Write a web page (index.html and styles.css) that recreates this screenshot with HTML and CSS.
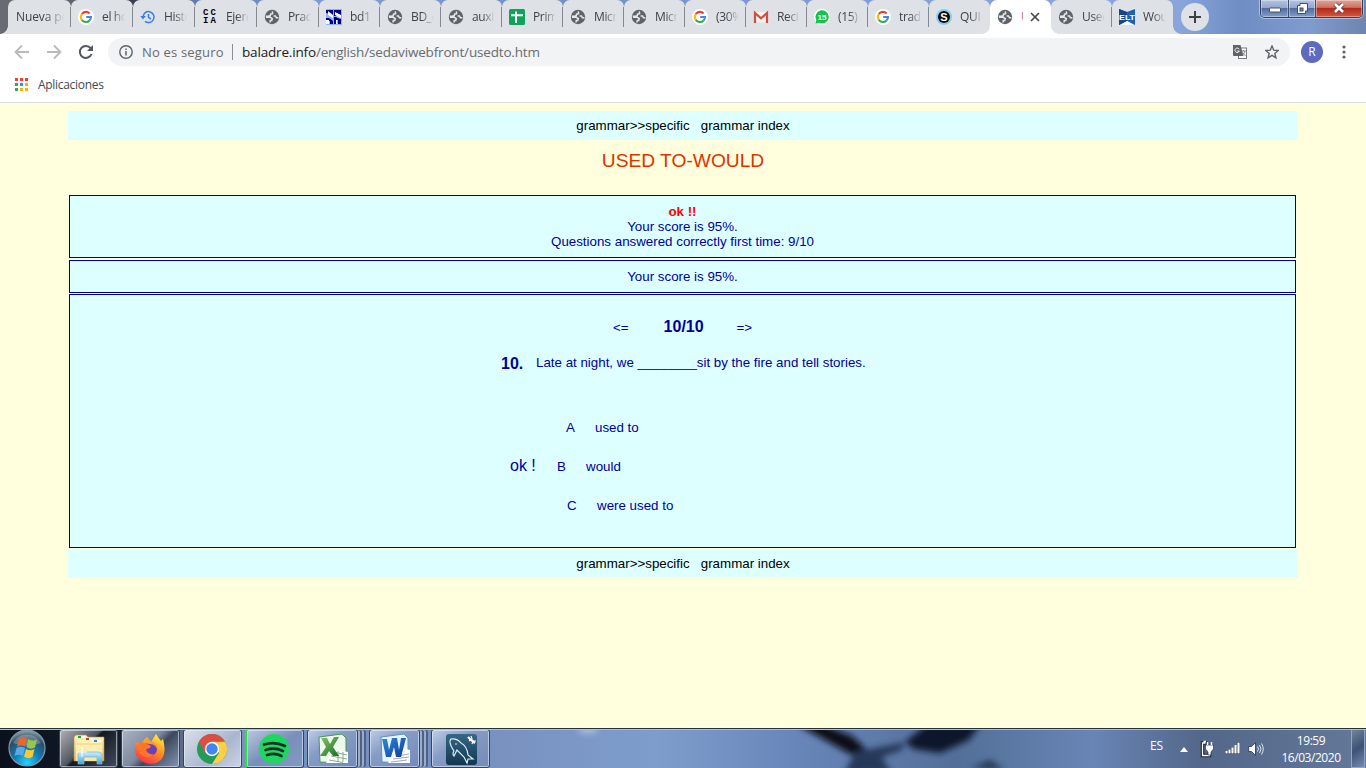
FILE: index.html
```html
<!DOCTYPE html>
<html lang="es">
<head>
<meta charset="utf-8">
<title>Used to - would</title>
<link rel="stylesheet" href="styles.css">
</head>
<body>
<svg class="defs" width="0" height="0">
  <defs>
    <symbol id="globe" viewBox="0 0 16 16"><circle cx="8" cy="8" r="7.2" fill="#5f6368"/><path d="M8.300 2.300 8.600 4.600 6.500 5.200 6.300 6.700 4 7.300H1.800M2 8.300H6.200L8.300 9.500 7.700 11.500H6.300L6 13.500M9.600 7H11.500L12.400 8.800H14.400" fill="none" stroke="#e6e8eb" stroke-width="1.500"/></symbol>
    <symbol id="google" viewBox="0 0 16 16"><circle cx="8" cy="8" r="8" fill="#fff"/><path d="M3.8 5.1A5 5 0 0 1 11.6 4.5" fill="none" stroke="#ea4335" stroke-width="2.1"/><path d="M3.8 5.1A5 5 0 0 0 3.8 10.9" fill="none" stroke="#fbbc05" stroke-width="2.1"/><path d="M3.8 10.9A5 5 0 0 0 11.5 11.5" fill="none" stroke="#34a853" stroke-width="2.1"/><path d="M11.5 11.5A5 5 0 0 0 13 8H8.2" fill="none" stroke="#4285f4" stroke-width="2.1"/></symbol>
    <linearGradient id="fold" x2="0" y2="1"><stop stop-color="#fff4b4"/><stop offset="1" stop-color="#e5bd5e"/></linearGradient>
    <linearGradient id="ice" x2="0" y2="1"><stop stop-color="#c9efff"/><stop offset="1" stop-color="#4ba3d2"/></linearGradient>
    <radialGradient id="orb" cx=".5" cy=".9" r=".9"><stop stop-color="#26d2ff"/><stop offset=".4" stop-color="#127bb5"/><stop offset=".75" stop-color="#2d4c63"/><stop offset="1" stop-color="#92a9b7"/></radialGradient>
    <linearGradient id="fox" x1=".8" x2=".3" y2="1"><stop stop-color="#fff044"/><stop offset=".45" stop-color="#ff9520"/><stop offset="1" stop-color="#f52e50"/></linearGradient>
    <linearGradient id="xl" x2="1" y2="1"><stop stop-color="#8cc569"/><stop offset="1" stop-color="#18702c"/></linearGradient>
    <linearGradient id="wd" x2="1" y2="1"><stop stop-color="#2a8cdf"/><stop offset="1" stop-color="#123a98"/></linearGradient>
    <linearGradient id="sql" x2="0" y2="1"><stop stop-color="#356889"/><stop offset="1" stop-color="#123750"/></linearGradient>
    <linearGradient id="sky"><stop stop-color="#0b111c"/><stop offset=".1" stop-color="#161e2e"/><stop offset=".15" stop-color="#8194b8"/><stop offset=".22" stop-color="#7490bf"/><stop offset=".35" stop-color="#7890be"/><stop offset=".48" stop-color="#7e9dcc"/><stop offset=".58" stop-color="#6986ba"/><stop offset=".7" stop-color="#526f98"/><stop offset=".8" stop-color="#6985b5"/><stop offset=".88" stop-color="#526789"/><stop offset="1" stop-color="#64799a"/></linearGradient>
    <filter id="soft" x="-30%" y="-60%" width="160%" height="220%"><feGaussianBlur stdDeviation="3"/></filter>
  </defs>
</svg>

<header class="tabstrip">
  <div class="tab wide first"><span class="label">Nueva pe</span></div>
  <div class="tab wide"><svg class="fav"><use href="#google"/></svg><span class="label">el ho</span></div>
  <div class="tab wide"><svg class="fav" viewBox="0 0 16 16"><path d="M3 8.2A5.5 5.5 0 1 1 5 12.3M8.5 5V8.4L11 10" fill="none" stroke="#3b7de8" stroke-width="1.5"/><path d="M.3 7H5.8L3 10.4Z" fill="#3b7de8"/></svg><span class="label">Histo</span></div>
  <div class="tab wide"><span class="fav ccia"><b>CC</b><b>IA</b></span><span class="label">Ejerc</span></div>
  <div class="tab wide"><svg class="fav"><use href="#globe"/></svg><span class="label">Prac</span></div>
  <div class="tab"><svg class="fav" viewBox="0 0 16 16"><rect width="16" height="16" fill="#8db0ff"/><path d="M0 1H7V7H5L1 4H0ZM8 1H15V7L11 4V7H8ZM0 9H3L7 12V15H4V12H0ZM8 8H10L15 12V15H12V11H8Z" fill="#000087"/><path d="M2 2 7 6V9L2 6ZM9 3 15 6V9L9 6ZM0 11H3V15H0ZM8 11H11V15H8Z" fill="#fff"/><path d="M1 1H7V5ZM9 1H15V5ZM8 8 15 10V13L10 10V15H8Z" fill="#000087"/></svg><span class="label">bd1</span></div>
  <div class="tab"><svg class="fav"><use href="#globe"/></svg><span class="label">BD_c</span></div>
  <div class="tab"><svg class="fav"><use href="#globe"/></svg><span class="label">auxil</span></div>
  <div class="tab"><svg class="fav" viewBox="0 0 16 16"><rect width="16" height="16" rx="1.5" fill="#12a15b"/><path d="M2 6.2H14M7 2.5V14" stroke="#fff" stroke-width="2"/></svg><span class="label">Prim</span></div>
  <div class="tab"><svg class="fav"><use href="#globe"/></svg><span class="label">Micr</span></div>
  <div class="tab"><svg class="fav"><use href="#globe"/></svg><span class="label">Micr</span></div>
  <div class="tab"><svg class="fav"><use href="#google"/></svg><span class="label">(30%</span></div>
  <div class="tab"><svg class="fav" viewBox="0 0 16 16"><rect x="1" y="3" width="14" height="10.5" fill="#f2f2f2"/><path d="M2 14V4L8 9.3 14 4V14" fill="none" stroke="#d54b3d" stroke-width="2.2"/></svg><span class="label">Reci</span></div>
  <div class="tab"><svg class="fav" viewBox="0 0 16 16"><circle cx="8" cy="8" r="8" fill="#fff"/><path d="M1.6 14.4 2.3 11A6.6 6.6 0 1 1 5 13.7Z" fill="#12c34c"/><text class="badge15" x="8" y="10.9" text-anchor="middle">15</text></svg><span class="label">(15)</span></div>
  <div class="tab"><svg class="fav"><use href="#google"/></svg><span class="label">trad</span></div>
  <div class="tab last-left"><svg class="fav" viewBox="0 0 16 16"><circle cx="8" cy="8" r="8" fill="#8bcdec"/><circle cx="8" cy="8" r="6" fill="#080808"/><text class="letter-s" x="8" y="12" text-anchor="middle">S</text></svg><span class="label">QUI</span></div>
  <div class="tab active"><svg class="fav"><use href="#globe"/></svg><span class="label sliver">U</span><svg class="close" viewBox="0 0 10 10"><path d="M1 1 9 9M9 1 1 9" stroke="#45494d" stroke-width="1.7"/></svg></div>
  <div class="tab after"><svg class="fav"><use href="#globe"/></svg><span class="label">Usec</span></div>
  <div class="tab end"><svg class="fav" viewBox="0 0 16 16"><path d="M0 0 8 3 16 0V16L8 12 0 16Z" fill="#1d62b0"/><path d="M0 0 8 3V12L0 16Z" fill="#174582"/><path d="M1.500 16 8 12 14.500 16Z" fill="#f6faff"/><text class="elt" x="0" y="10.500" textLength="16" lengthAdjust="spacingAndGlyphs">ELT</text></svg><span class="label">Wou</span></div>
  <div class="newtab"><svg viewBox="0 0 12 12"><path d="M6 0V12M0 6H12" stroke="#3c4043" stroke-width="2"/></svg></div>
  <div class="wincontrols">
    <span class="wc min"><svg viewBox="0 0 14 14"><rect x="1.5" y="7" width="11" height="4" rx=".7" fill="#fff" stroke="#464f63"/></svg></span>
    <span class="wc max"><svg viewBox="0 0 14 14"><path d="M5 2.500H12.500V10H10.500V12.500H2.500V4.500H5Z" fill="#fff" stroke="#464f63"/><rect x="5" y="7" width="3" height="3" fill="#6885b8" stroke="#464f63"/></svg></span>
    <span class="wc shut"><svg viewBox="0 0 14 14"><path d="M3 3 11 11M11 3 3 11" stroke="#593a42" stroke-width="4.400"/><path d="M3 3 11 11M11 3 3 11" stroke="#fff" stroke-width="2.600"/></svg></span>
  </div>
</header>

<nav class="toolbar">
  <svg class="nav-ic" viewBox="0 0 16 16"><path d="M15 8H2M8 1.500 1.500 8 8 14.500" fill="none" stroke="#bababc" stroke-width="1.800"/></svg>
  <svg class="nav-ic" viewBox="0 0 16 16"><path d="M1 8H14M8 1.500 14.500 8 8 14.500" fill="none" stroke="#bababc" stroke-width="1.800"/></svg>
  <svg class="nav-ic" viewBox="0 0 16 16"><path d="M13.500 10A6 6 0 1 1 12.600 4.200" fill="none" stroke="#53575b" stroke-width="2"/><path d="M15 1V7H9Z" fill="#53575b"/></svg>
  <div class="omnibox">
    <svg class="info" viewBox="0 0 14 14"><circle cx="7" cy="7" r="6.200" fill="none" stroke="#5f6368" stroke-width="1.400"/><path d="M7 6V10.500M7 3.400V5" stroke="#5f6368" stroke-width="1.500"/></svg>
    <span class="insecure">No es seguro</span><i class="divider"></i>
    <span class="url"><b>baladre.info</b>/english/sedaviwebfront/usedto.htm</span>
    <svg class="translate" viewBox="0 0 14 14"><rect x="5.500" y="3" width="8" height="10.500" fill="#fff" stroke="#777b80"/><path d="M0 0H7.500L10.500 11H1Q0 11 0 10Z" fill="#5f6368"/><path d="M6.200 4.300A2.200 2.200 0 1 0 6.300 6H4.400" fill="none" stroke="#fff"/><path d="M8 6H13M10.500 5V6M12 6Q11 9 9 10.500M9.500 7.500 12.500 11" fill="none" stroke="#777b80" stroke-width=".9"/></svg>
    <svg class="star" viewBox="0 0 14 14"><path d="M7 1 8.700 5.200 13.200 5.500 9.800 8.400 10.900 12.800 7 10.400 3.100 12.800 4.200 8.400 .8 5.500 5.300 5.200Z" fill="none" stroke="#5f6368" stroke-width="1.400"/></svg>
  </div>
  <span class="avatar">R</span>
  <svg class="dots" viewBox="0 0 4 14"><g fill="#5f6368"><circle cx="2" cy="2" r="1.600"/><circle cx="2" cy="7" r="1.600"/><circle cx="2" cy="12" r="1.600"/></g></svg>
</nav>
<div class="bookmarks">
  <span class="apps"><i class="red"></i><i class="red"></i><i class="red"></i><i class="grn"></i><i class="blu"></i><i class="yel"></i><i class="grn"></i><i class="yel"></i><i class="yel"></i></span>
  <span class="bm-label">Aplicaciones</span>
</div>

<main class="page">
  <div class="navbar">grammar&gt;&gt;specific&nbsp;&nbsp; grammar index</div>
  <h1 class="title">USED TO-WOULD</h1>
  <section class="panel feedback"><strong>ok !!</strong><br>Your score is 95%.<br>Questions answered correctly first time: 9/10</section>
  <section class="panel score">Your score is 95%.</section>
  <section class="panel quiz">
    <div class="pager"><span>&lt;=</span><b>10/10</b><span>=&gt;</span></div>
    <div class="question"><b>10.</b><span>Late at night, we ________sit by the fire and tell stories.</span></div>
    <div class="answer opt-a"><span class="key">A</span><span>used to</span></div>
    <div class="answer opt-b"><span class="mark">ok !</span><span class="key">B</span><span>would</span></div>
    <div class="answer opt-c"><span class="key">C</span><span>were used to</span></div>
  </section>
  <div class="navbar bottom">grammar&gt;&gt;specific&nbsp;&nbsp; grammar index</div>
</main>

<footer class="taskbar">
  <svg class="wallpaper" viewBox="0 0 1366 40"><rect width="1366" height="40" fill="url(#sky)"/><g filter="url(#soft)"><path d="M796-4H822L852 8 868 23 854 28Z" fill="#090e17"/><path d="M855 24 905 14 902 22 882 29 892 46H844Z" fill="#26375a"/><path d="M905 14 926-3H980L969 12 940 25 914 21Z" fill="#10182a"/><path d="M970 40 990 32 1005 42Z" fill="#273951"/><ellipse cx="588" cy="2" rx="10" ry="3" fill="#b5c8e4"/></g></svg>
  <svg class="start" viewBox="0 0 38 38"><circle cx="19" cy="19" r="18" fill="url(#orb)" stroke="#8198a8" stroke-width="1.200"/><path d="M5 14A16 16 0 0 1 33 14Q20 19 5 14Z" fill="#fff" opacity=".25"/><path d="M11 10Q15 7 19 9.500L17 17.500Q13 15.500 9 18Z" fill="#ec662c"/><path d="M20 10Q25 13 29 10.500L27 18.500Q23 21 18.500 18Z" fill="#9ac54b"/><path d="M8.500 19Q13 16.500 17 19L15 27Q11 24.500 6.500 27Z" fill="#58a9e8"/><path d="M18 20Q22 22.500 26.500 20L24.500 28Q20 30.500 16 27.500Z" fill="#fdc82e"/></svg>
  <div class="task dark"><svg viewBox="0 0 34 34"><path d="M2 5 4 3H14L16 5H32V29H2Z" fill="url(#fold)" stroke="#b78e3c" stroke-width=".6"/><path d="M4 8H30V11H4ZM4 13H30V29H4Z" fill="#fff5bf" opacity=".75"/><path d="M6 4H13V6H6ZM14 6H21V8H14ZM22 8H29V10H22Z" fill="#fff"/><path d="M6 4H9V6H6Z" fill="#19a83d"/><path d="M14 6H17V8H14Z" fill="#cb4427"/><path d="M22 8H25V10H22Z" fill="#168de3"/><path d="M6 32V22Q6 20 9 20H26Q30 20 30 23V32H25V25H12V32Z" fill="url(#ice)" stroke="#76b6d6" stroke-width=".7"/><path d="M10 15V25M5 20H15" stroke="#fff"/></svg></div>
  <div class="task mid"><svg viewBox="0 0 34 34"><path d="M2 9 7 12 14 5 18 10 23 2Q26 7 28 9L30 7Q34 21 28 28 20 35 10 30 1 25 2 16Z" fill="url(#fox)"/><circle cx="17" cy="17" r="7" fill="#6a3fc0"/><path d="M4 13Q9 8 14 12L18 14Q17 17 13 17 14 23 21 22 16 28 9 23 4 18 4 13Z" fill="#ff7426"/><path d="M14 5 18 10Q25 10 25 19 23 12 17 12L11 11Z" fill="#ff9c22"/></svg></div>
  <div class="task light"><svg viewBox="0 0 34 34"><circle cx="17" cy="17" r="15" fill="#249b56"/><path d="M17 9.500H30A15 15 0 0 1 17 32L24 21Z" fill="#fdcf48"/><path d="M4 9.500A15 15 0 0 1 30 9.500H17L10 21Z" fill="#dc4e41"/><circle cx="17" cy="17" r="7.200" fill="#fff"/><circle cx="17" cy="17" r="5.700" fill="#4285f4"/></svg></div>
  <div class="task green"><svg viewBox="0 0 34 34"><circle cx="17" cy="17" r="15" fill="#1ed760"/><path d="M7 12.500Q18 9 28 14M8.500 18Q18 15 26 19M10 23Q18 20.500 24.500 24" fill="none" stroke="#142d25" stroke-width="2.700" stroke-linecap="round"/></svg></div>
  <div class="task stack"><svg viewBox="0 0 34 34"><path d="M3 5 26 2 30 6V31L4 30Z" fill="#edf7ea" stroke="#4b9557"/><path d="M17 17 32 20V31H10Z" fill="#fff"/><path d="M18 20 31 23M15 24 31 27M13 28 27 30.500M22 19V30M27 20V30" stroke="#6b9c70" stroke-width=".8"/><path d="M5 6H11L14 12 18 5H23L17 15 23 24H17L13 19 10 24H4L10 15Z" fill="url(#xl)"/></svg></div>
  <div class="task stack"><svg viewBox="0 0 34 34"><path d="M3 5 26 2 30 6V31L4 30Z" fill="#e8f2ff" stroke="#5e8dc0"/><path d="M17 15 32 18V31H10Z" fill="#fff"/><path d="M19 24 31 22M15 27 31 25M13 30 29 28" stroke="#8493a9" stroke-width=".8"/><path d="M4 7H9L11 18 14 6H19L21 18 23 6H28L23 25H18L16 15 13 25H8Z" fill="url(#wd)"/></svg></div>
  <div class="task"><svg viewBox="0 0 34 34"><rect x="2" y="2" width="31" height="31" rx="3" fill="url(#sql)"/><path d="M10 19Q4 10 7 7 13 6 17 11 23 14 24 23L29 27 24 27 23 31 20 25Q17 22 13 18L10 24Q8 22 10 19Z" fill="none" stroke="#dcecf5" stroke-width="1.200"/><circle cx="12" cy="12" r=".8" fill="#fff"/><path d="M24 5 27 8 31 11" fill="none" stroke="#fff" stroke-width="2.200"/><path d="M27 4 28 7 25 9M28 12 29 9 32 9" fill="none" stroke="#fff" stroke-width="1.200"/></svg></div>
  <div class="tray">
    <span class="lang">ES</span>
    <svg class="up" viewBox="0 0 8 5"><path d="M0 5 4 0 8 5Z" fill="#fff"/></svg>
    <svg class="power" viewBox="0 0 16 18"><path d="M8 3H3.500V15.500H10.500V13" fill="none" stroke="#172239" stroke-width="3.500"/><path d="M6.500 3H3.500V15.500H10.500V13M4.500 1.500H7" fill="none" stroke="#fff" stroke-width="1.300"/><path d="M6.500 5H14.500V9L12 12V15H9V12L6.500 9Z" fill="#fff" stroke="#26334b" stroke-width=".7"/><path d="M8.500 5V2M12.500 5V2" stroke="#fff" stroke-width="1.500"/></svg>
    <svg class="signal" viewBox="0 0 16 12"><path d="M1.500 12V9M4.500 12V7.500M7.500 12V5.500M10.500 12V3M13.500 12V0" stroke="#1c2941" stroke-width="3"/><path d="M1.500 11.500V9M4.500 11.500V7.500M7.500 11.500V5.500M10.500 11.500V3M13.500 11.500V.5" stroke="#fff" stroke-width="2.200"/></svg>
    <svg class="sound" viewBox="0 0 16 14"><path d="M.7 4.500H3.500L7.500 .7V13.300L3.500 9.500H.7Z" fill="#fff" stroke="#23314a" stroke-width=".8"/><path d="M9.500 4.500Q11.500 7 9.500 9.500M11.500 3Q14.500 7 11.500 11M13.500 1.500Q17 7 13.500 12.500" fill="none" stroke="#dbe5f2"/></svg>
    <div class="clock"><span>19:59</span><span>16/03/2020</span></div>
  </div>
  <div class="peek"></div>
</footer>
</body>
</html>
```
FILE: styles.css
```css
* { box-sizing: border-box; }
body { margin: 0; width: 1366px; height: 768px; overflow: hidden; display: flex; flex-direction: column; background: #ffffdd; font-family: "Liberation Sans", Arial, sans-serif; }
svg { display: block; flex: none; }
.defs { position: absolute; }

/* Tab strip */
.tabstrip { height: 34px; display: flex; padding-left: 9px; position: relative; background: linear-gradient(90deg, #686b72 0, #606570 70px, #393d50 132px, #6480b5 200px, #7f9dd2 330px, #7390c5 560px, #84a0d5 900px, #89a6db 1180px, #6f8dc3 1240px, #7f9ccf 1310px, #6e85ad 1366px); font-family: "Open Sans", "Noto Sans", sans-serif; }
.tab { width: 61px; height: 34px; flex: none; display: flex; align-items: center; padding-left: 7px; background: #dee1e6; border-radius: 7px 7px 0 0; position: relative; }
.tab.wide { width: 62px; }
.tab::after { content: ""; position: absolute; right: 0; top: 7px; width: 1px; height: 20px; background: #85888c; }
.last-left::after, .active::after, .end::after { display: none; }
.tab.first { margin-left: -1px; width: 63px; padding-left: 8px; }
.tab.active { background: #fff; }
.active::before, .after::before, .first::before, .end::before { content: ""; position: absolute; bottom: 0; width: 8px; height: 8px; }
.active::before { left: -8px; background: radial-gradient(circle at 0 0, transparent 7.5px, #fff 8px); }
.after::before { left: 0; background: radial-gradient(circle at 100% 0, transparent 7.5px, #fff 8px); }
.first::before { left: -8px; background: radial-gradient(circle at 0 0, transparent 7.5px, #dee1e6 8px); }
.end::before { right: -8px; background: radial-gradient(circle at 100% 0, transparent 7.5px, #dee1e6 8px); }
.fav { width: 16px; height: 16px; flex: none; }
.label { margin-left: 8px; width: 23px; overflow: hidden; white-space: nowrap; font-size: 12px; letter-spacing: -.35px; line-height: 18px; color: #404346; -webkit-mask-image: linear-gradient(90deg, #000 45%, transparent); mask-image: linear-gradient(90deg, #000 45%, transparent); }
.first .label { margin-left: 0; width: 48px; letter-spacing: -.1px; -webkit-mask-image: linear-gradient(90deg, #000 60%, transparent); mask-image: linear-gradient(90deg, #000 60%, transparent); }
.label.sliver { width: 2px; -webkit-mask-image: none; mask-image: none; color: #a56a8d; }
.close { width: 10px; height: 10px; margin-left: 7px; }
.ccia { display: flex; flex-direction: column; font: bold 9px/8px "Liberation Mono", monospace; color: #000; letter-spacing: 2px; padding-left: 1px; }
.badge15 { font: bold 8px "Liberation Sans", sans-serif; fill: #fff; }
.letter-s { font: bold 11px "Liberation Sans", sans-serif; fill: #fff; }
.elt { font: bold 8px "Liberation Sans", sans-serif; fill: #fff; }
.newtab { width: 28px; height: 28px; margin: 3px 0 0 8px; flex: none; border-radius: 50%; background: #dee1e6; display: flex; align-items: center; justify-content: center; }
.newtab svg { width: 12px; height: 12px; }
.wincontrols { margin-left: 51px; width: 103px; height: 18px; flex: none; display: flex; border: 1px solid #35415b; border-top: 0; border-radius: 0 0 5px 5px; overflow: hidden; box-shadow: 0 0 0 1px #a9bee2; }
.wc { width: 28px; display: flex; justify-content: center; align-items: center; padding-bottom: 2px; border-right: 1px solid #414d6c; background: linear-gradient(#b3c4e1, #93a8ce 45%, #526c9e 50%, #829ece); box-shadow: inset 0 0 0 1px rgba(255,255,255,.35); }
.wc svg { width: 14px; height: 14px; }
.wc.max { width: 27px; }
.wc.shut { flex: 1; border: 0; background: linear-gradient(#dba69c, #cf725f 43%, #b3291b 50%, #d25a3e); }

/* Address bar */
.toolbar { height: 36px; flex: none; background: #fff; display: flex; align-items: center; padding-left: 14px; font-family: "Open Sans", "Noto Sans", sans-serif; }
.nav-ic { width: 16px; height: 16px; margin-right: 16px; }
.omnibox { width: 1182px; height: 28px; margin-left: -2px; background: #f1f3f4; border-radius: 14px; display: flex; align-items: center; padding: 0 11px; font-size: 14px; color: #686c70; white-space: nowrap; }
.info { width: 14px; height: 14px; }
.insecure { margin-left: 9px; width: 82px; font-size: 13px; letter-spacing: .18px; }
.divider { width: 1px; height: 16px; margin: 0 9px 0 8px; background: #8b8e92; }
.url { width: 320px; font-size: 13.5px; letter-spacing: -.17px; }
.url b { font-weight: 400; color: #202124; }
.translate { width: 14px; height: 14px; margin-left: auto; }
.star { width: 14px; height: 14px; margin-left: 18px; }
.avatar { width: 22px; height: 22px; margin-left: 11px; border-radius: 50%; background: #5c6bc0; color: #fff; font-size: 12px; line-height: 22px; text-align: center; }
.dots { width: 4px; height: 14px; margin-left: 19px; }
.bookmarks { height: 33px; flex: none; background: #fff; border-bottom: 1px solid #d9dbdf; display: flex; align-items: center; padding: 0 0 4px 15px; font: 12px "Open Sans", "Noto Sans", sans-serif; color: #45494d; }
.apps { display: grid; grid-template-columns: repeat(3, 3px); gap: 2px; }
.apps i { width: 3px; height: 3px; }
.apps .red { background: #ea4335; }
.apps .grn { background: #34a853; }
.apps .blu { background: #4285f4; }
.apps .yel { background: #f4b400; }
.bm-label { margin-left: 10px; letter-spacing: -.3px; }

/* Quiz page */
.page { flex: 1; padding: 8px 68px 0; font-size: 13.333px; line-height: 15px; color: #000099; }
.navbar { width: 1230px; height: 29px; background: #ddffff; color: #000; text-align: center; line-height: 29px; }
.title { margin: 0; height: 55px; padding-top: 9px; font-size: 19.2px; font-weight: 400; line-height: 23px; color: #dd3300; text-align: center; }
.panel { width: 1227px; margin-left: 1px; background: #ddffff; border: 1px solid #000099; text-align: center; }
.feedback { height: 63px; padding-top: 8px; }
.feedback strong { color: #ff0000; }
.score { height: 33px; margin-top: 2px; padding-top: 8px; }
.quiz { height: 254px; margin-top: 1px; padding-top: 22px; text-align: left; }
.quiz b { font-size: 16px; }
.pager { display: flex; align-items: center; height: 20px; padding-left: 543px; }
.pager b { width: 41px; margin: 0 32px 2px 35px; }
.question { display: flex; align-items: center; height: 20px; margin-top: 15px; padding-left: 431px; }
.question b { width: 35px; padding-top: 2px; }
.answer { display: flex; align-items: center; height: 20px; margin-top: 19px; }
.answer.opt-a { margin-top: 45px; padding-left: 496px; }
.answer.opt-b { padding-left: 440px; }
.answer.opt-c { padding-left: 497px; }
.key { width: 29px; }
.opt-c .key { width: 30px; }
.mark { width: 47px; font-size: 16px; padding-bottom: 2px; }
.navbar.bottom { margin-top: 1px; }

/* Taskbar */
.taskbar { height: 40px; flex: none; position: relative; display: flex; align-items: flex-start; overflow: hidden; }
.wallpaper { position: absolute; top: 0; left: 0; width: 1366px; height: 40px; z-index: -1; }
.taskbar::after { content: ""; position: absolute; top: 0; left: 0; right: 0; height: 2px; background: linear-gradient(#27313b 50%, #b0c1cc 50%); }
.start { width: 38px; height: 38px; margin: 1px 13px 0 8px; }
.task { width: 59px; height: 39px; margin: 1px 3px 0 0; flex: none; border: 1px solid #35435d; border-radius: 3px; box-shadow: inset 0 0 0 1px rgba(235,243,255,.55); background: linear-gradient(145deg, rgba(229,238,250,.65), rgba(157,174,206,.4) 40%, rgba(105,129,173,.35)); display: flex; align-items: center; justify-content: center; }
.task svg { width: 34px; height: 34px; }
.task.dark { background: linear-gradient(135deg, #b1b2b5, #515762 43%, #131923 48%, #424b5c); }
.task.mid { background: linear-gradient(135deg, #adb5c6, #7c889e 45%, #3e485c 58%, #8494b4); }
.task.light { background: linear-gradient(135deg, #dbe0e8, #a9b6cf 60%, #cbd4e4); }
.task.green { border-left: 2px solid #20e83b; background: linear-gradient(145deg, #b9c8df, #7890b9 50%, #8399c0); }
.task.green svg, .task.light svg, .task.mid svg { margin-left: -2px; }
.task.stack { width: 51px; margin-right: 11px; box-shadow: inset 0 0 0 1px rgba(235,243,255,.55), 3px 0 0 -1px #9daccb, 5px 0 0 -1px #4d6288, 7px 0 0 -1px #9cabca, 9px 0 0 -1px #4d6288; }
.tray { margin-left: auto; height: 40px; display: flex; align-items: center; color: #fff; font: 12px "Open Sans", "Noto Sans", sans-serif; }
.lang { width: 30px; margin-bottom: 5px; letter-spacing: -.2px; }
.up { width: 8px; height: 5px; margin: 3px 12px 0 0; }
.power { width: 16px; height: 18px; margin: 2px 10px 0 -1px; }
.signal { width: 16px; height: 12px; margin-right: 7px; }
.sound { width: 16px; height: 14px; margin: 2px 14px 0 0; }
.clock { width: 66px; display: flex; flex-direction: column; text-align: center; line-height: 17px; letter-spacing: -.45px; padding-top: 1px; }
.peek { width: 14px; height: 39px; margin: 1px 1px 0 7px; flex: none; border: 1px solid #93a6c2; background: linear-gradient(145deg, #71839c, #3d5375 50%, #7589b2); }
```
